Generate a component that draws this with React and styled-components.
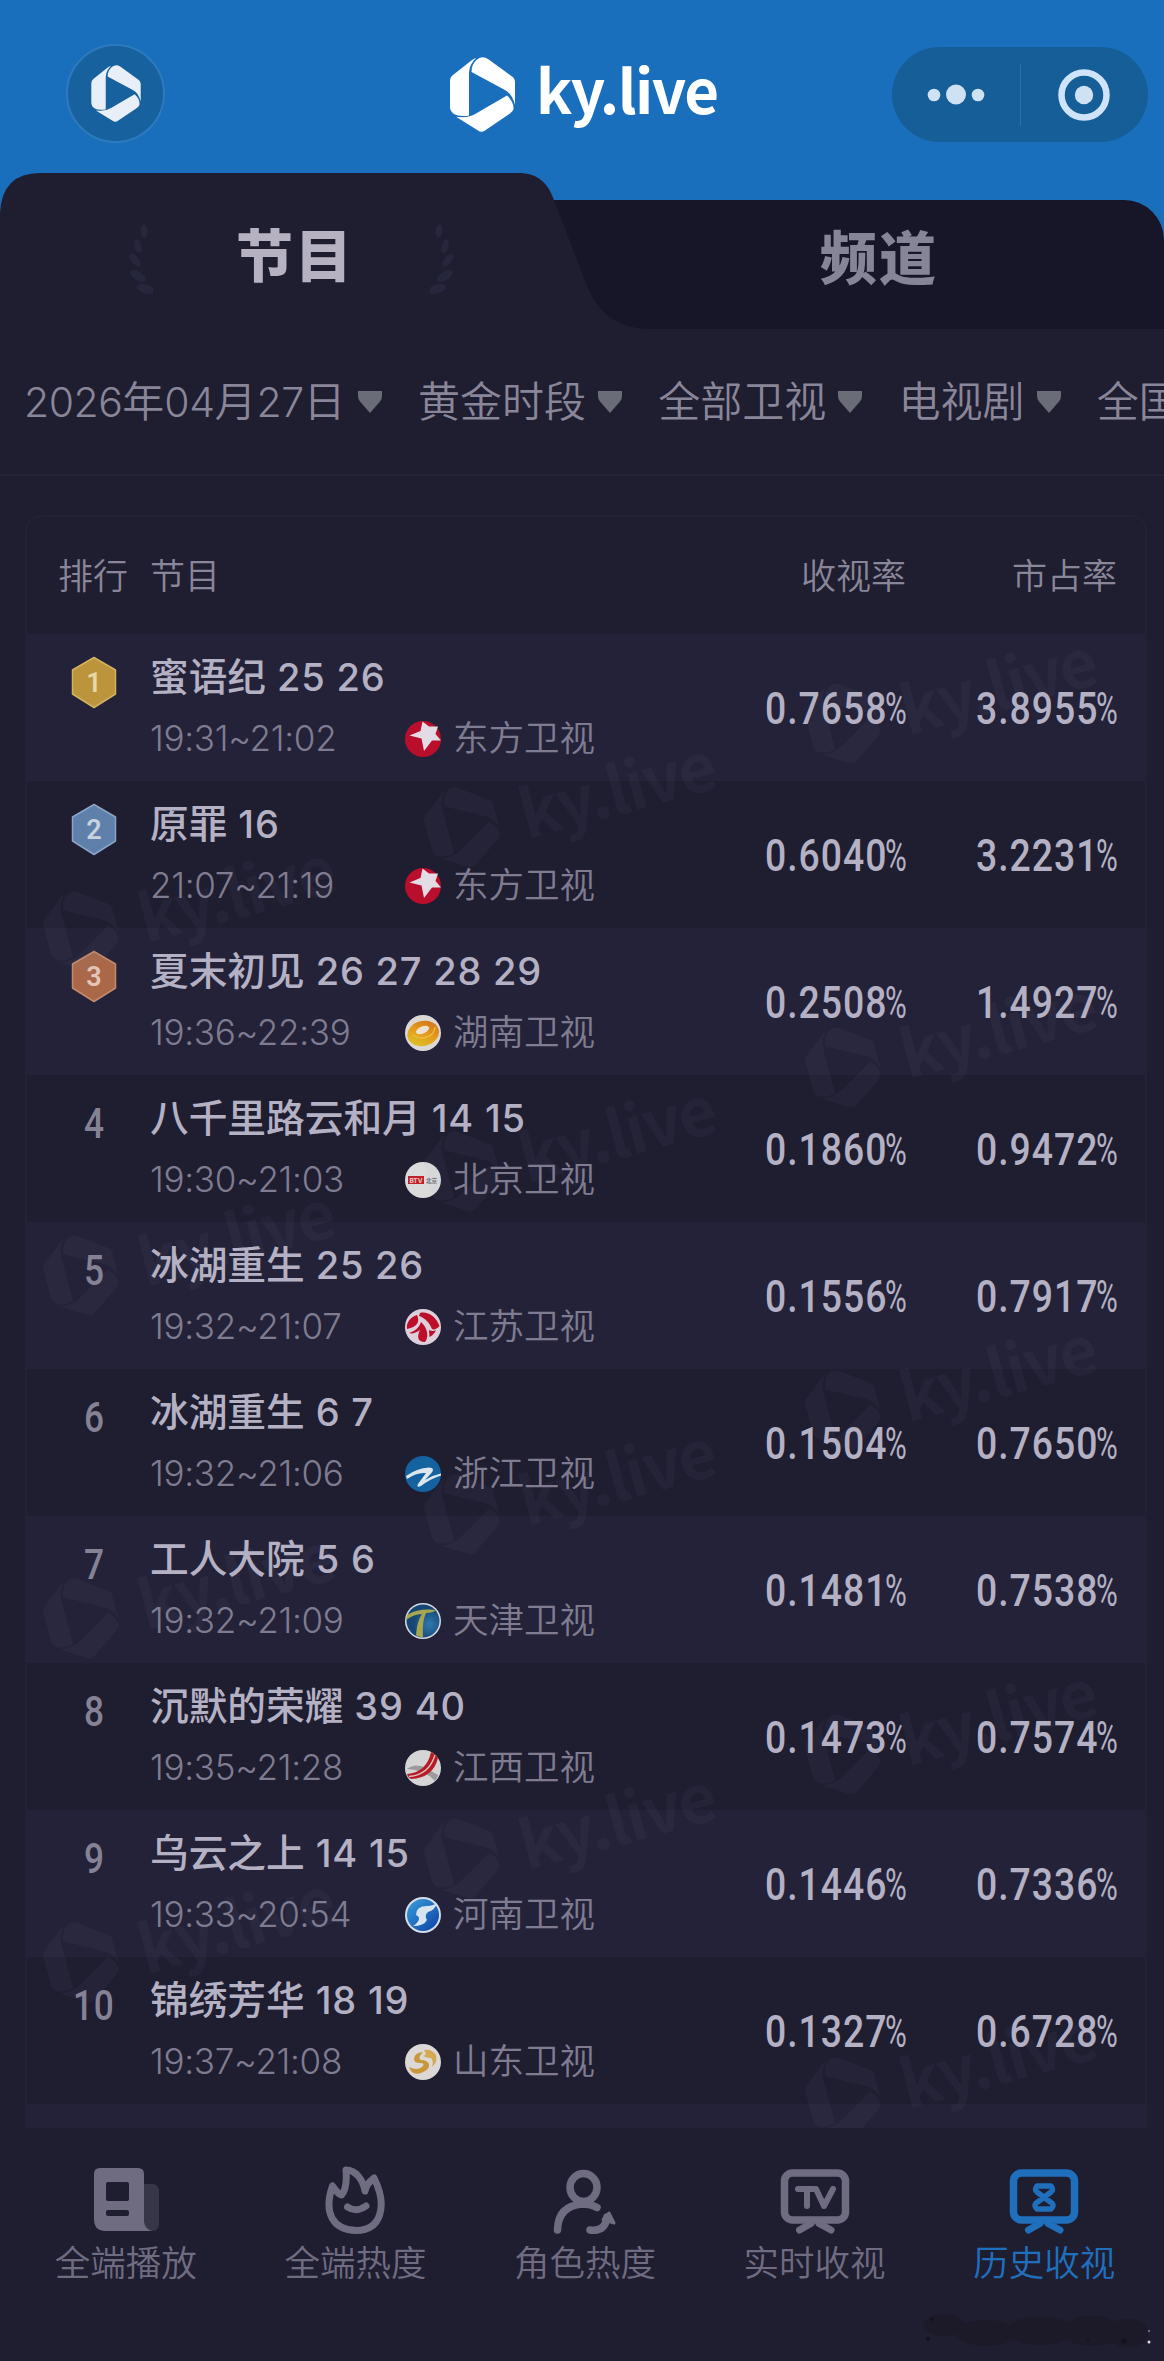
import React from 'react';
import styled, { createGlobalStyle } from 'styled-components';

const color = {
  blue: '#1a6fbc',
  blueDark: '#165e98',
  page: '#1f1d30',
  tabDark: '#171528',
  stripe: '#242238',
  line: '#252338',
  title: '#b4b1c4',
  text: '#898699',
  muted: '#6f6c82',
  active: '#1f6fbd',
};

const GlobalStyle = createGlobalStyle`
  * {
    box-sizing: border-box;
  }
  body {
    margin: 0;
    background: ${color.page};
    font-family: Inter, 'Noto Sans CJK SC', sans-serif;
  }
`;

const Screen = styled.div`
  width: 1164px;
  height: 2361px;
  overflow: hidden;
  display: flex;
  flex-direction: column;
  background: ${color.page};
`;

const Header = styled.header`
  height: 173px;
  flex: none;
  display: grid;
  grid-template-columns: 384px 1fr 272px;
  padding: 44px 0 0;
  align-items: start;
  background: ${color.blue};
`;

const RoundButton = styled.div`
  width: 99px;
  height: 99px;
  margin-left: 66px;
  border-radius: 50%;
  border: 2px solid #2d7abd;
  background: #17619f;
  display: flex;
  align-items: center;
  justify-content: center;
`;

const Brand = styled.div`
  display: flex;
  align-items: flex-start;
  padding: 13px 0 0 66px;
  color: #fff;
`;

const BrandText = styled.strong`
  margin: -1px 0 0 21px;
  font-family: 'Noto Sans CJK SC', sans-serif;
  font-weight: 700;
  font-size: 60px;
  line-height: 64px;
  letter-spacing: -1.6px;
  white-space: nowrap;
`;

const Capsule = styled.div`
  width: 256px;
  height: 95px;
  margin-top: 3px;
  border-radius: 48px;
  background: ${color.blueDark};
  display: flex;
  align-items: center;
`;

const CapsuleHalf = styled.div`
  flex: 1;
  display: flex;
  align-items: center;
  justify-content: center;
`;

const CapsuleLine = styled.div`
  width: 1px;
  height: 62px;
  background: #2d71a8;
`;

const TabBar = styled.div`
  height: 156px;
  flex: none;
  display: flex;
  background: linear-gradient(${color.blue} 100px, ${color.page} 100px);
`;

const ActiveTab = styled.div`
  width: 660px;
  height: 156px;
  flex: none;
  z-index: 1;
  display: flex;
  align-items: center;
  padding: 12px 0 0 127px;
  background: ${color.page};
  clip-path: path(
    'M0 40 Q2 0 40 0 H518 C538 0 548 10 554 27 L582 100 C592 128 606 156 652 156 H0 Z'
  );
`;

const InactiveTab = styled.div`
  flex: 1;
  height: 129px;
  margin: 27px 0 0 -120px;
  padding: 0 0 11px 54px;
  display: flex;
  align-items: center;
  justify-content: center;
  border-radius: 0 40px 0 0;
  background: ${color.tabDark};
`;

const TabText = styled.span`
  width: 118px;
  text-align: center;
  white-space: nowrap;
  font-size: 57px;
  font-weight: 900;
  line-height: 70px;
  letter-spacing: 2px;
  color: ${props => (props.$active ? '#b6b2c1' : '#868598')};
`;

const Laurel = styled.svg`
  margin: ${props => (props.$right ? '0 0 0 76px' : '0 83px 0 0')};
  transform: ${props => (props.$right ? 'scaleX(-1)' : 'none')};
`;

const Filters = styled.div`
  height: 147px;
  flex: none;
  display: flex;
  align-items: flex-start;
  padding: 43px 0 0 24px;
  border-bottom: 2px solid ${color.line};
  overflow: hidden;
`;

const Filter = styled.div`
  flex: none;
  display: flex;
  align-items: center;
  gap: 12px;
  margin-right: 36.3px;
  font-size: 42px;
  font-weight: 350;
  line-height: 60px;
  color: ${color.text};
  white-space: nowrap;
`;

const Digits = styled.span`
  font-size: ${props => props.$size}px;
  letter-spacing: ${props => props.$gap}px;
`;

const Card = styled.section`
  position: relative;
  flex: none;
  width: 1122px;
  height: 1613px;
  margin: 39px 0 0 25px;
  overflow: hidden;
  border: 2px solid #232136;
  border-bottom: 0;
  border-radius: 16px 16px 0 0;
`;

const columns = '121px 1fr 220px 211px';

const TableHead = styled.div`
  height: 117px;
  display: grid;
  grid-template-columns: ${columns};
  padding: 33px 28px 0 2px;
  font-size: 35px;
  font-weight: 350;
  line-height: 52px;
  color: ${color.text};
  white-space: nowrap;
`;

const HeadCell = styled.div`
  text-align: ${props => props.$align || 'left'};
  padding-left: ${props => props.$pad || 0}px;
`;

const Row = styled.div`
  height: 147px;
  display: grid;
  grid-template-columns: ${columns};
  padding: 0 28px 0 2px;
  background: ${props => (props.$striped ? color.stripe : color.page)};
`;

const Rank = styled.div`
  display: flex;
  justify-content: center;
  padding: 22px 0 0 9px;
`;

const RankNumber = styled.span`
  font-family: Roboto, sans-serif;
  font-weight: 500;
  font-size: 42px;
  line-height: 54px;
  letter-spacing: 1px;
  color: #858296;
  transform: scaleX(0.84);
`;

const Program = styled.div`
  padding-top: 17px;
`;

const ProgramTitle = styled.div`
  font-size: 38.7px;
  font-weight: 500;
  line-height: 52px;
  color: ${color.title};
  white-space: nowrap;
`;

const ProgramMeta = styled.div`
  display: grid;
  grid-template-columns: 255px 36px 1fr;
  align-items: center;
  margin-top: 9px;
  font-size: 35.5px;
  font-weight: 350;
  line-height: 52px;
  color: #7f7c91;
  white-space: nowrap;
`;

const ChannelName = styled.span`
  padding-left: 12px;
`;

const Rate = styled.div`
  display: flex;
  justify-content: flex-end;
  align-items: center;
  padding-top: 2px;
  font-family: Roboto, sans-serif;
  font-size: 45px;
  font-weight: 500;
  color: ${color.title};
`;

const RateNumber = styled.span`
  display: block;
  width: 120px;
  letter-spacing: 1.2px;
  transform: scaleX(0.83);
  transform-origin: 0 50%;
`;

const RatePercent = styled.span`
  display: block;
  width: 21px;
  font-weight: 400;
  transform: scaleX(0.66);
  transform-origin: 0 50%;
`;

const Watermark = styled.div`
  position: absolute;
  left: ${props => props.$x}px;
  top: ${props => props.$y}px;
  display: flex;
  align-items: center;
  color: rgba(150, 145, 190, 0.055);
  transform: rotate(-15deg) scale(1.1);
  transform-origin: 32px 37px;
  pointer-events: none;
`;

const BottomNav = styled.nav`
  position: relative;
  flex: 1;
  display: grid;
  grid-template-columns: repeat(5, 229.6px);
  align-content: start;
  padding: 34px 0 0 11px;
`;

const NavItem = styled.div`
  display: flex;
  flex-direction: column;
  align-items: center;
  gap: 4px;
  color: ${props => (props.$active ? color.active : color.muted)};
  font-size: 35.5px;
  font-weight: 350;
  line-height: 52px;
  white-space: nowrap;
`;

const Smudge = styled.svg`
  position: absolute;
  right: 10px;
  bottom: 8px;
`;

const Logo = ({ width, height, fill = 'currentColor' }) => (
  <svg width={width} height={height} viewBox="0 0 65 75" fill={fill}>
    <path d="M0 24Q0 20 3 18L22 3Q25 1 26 1Q19.5 7 19 16V58.5Q9 60 4 57Q0 54 0 50Z" />
    <path d="M21.5 15Q21.5 7 27 2.5Q32.5-1.5 38 2L62 19.5Q65 21.5 65 25V48Q62 36 54 32.5Z" />
    <path d="M6 59.8Q18 61.5 26 56.5L57 38.5Q64 45 63.5 52Q63 54.5 60 56.5L35 73.5Q31.5 76 28 73.5Z" />
  </svg>
);

const LaurelLeaves = ({ right }) => (
  <Laurel $right={right} width="26" height="76" viewBox="0 0 26 76" fill="#26263d">
    <ellipse cx="17" cy="12" rx="3.5" ry="6.5" transform="rotate(-5 17 12)" />
    <ellipse cx="11" cy="27" rx="3.5" ry="7" transform="rotate(-15 11 27)" />
    <ellipse cx="8" cy="41" rx="3.8" ry="7.5" transform="rotate(-38 8 41)" />
    <ellipse cx="11" cy="57" rx="4.5" ry="9" transform="rotate(-58 11 57)" />
    <ellipse cx="19" cy="70" rx="4.5" ry="9.5" transform="rotate(-72 19 70)" />
  </Laurel>
);

const Caret = () => (
  <svg width="24" height="22" viewBox="0 0 24 22">
    <path d="M0 0H24V5Q24 8 22 10.5L12 22L2 10.5Q0 8 0 5Z" fill="#6a6c77" />
  </svg>
);

const medals = {
  1: ['#bb943c', '#d2b35f', '#e6d9a8'],
  2: ['#5f80aa', '#8aa4c4', '#c9d2df'],
  3: ['#aa6849', '#c48a6c', '#e2c6b8'],
};

const Medal = ({ rank }) => {
  const [fill, edge, ink] = medals[rank];

  return (
    <svg width="46" height="54" viewBox="0 0 46 54">
      <path
        d="M23 1.5L44.5 14V38L23 51.5L1.5 38V14Z"
        fill={fill}
        stroke={edge}
        strokeWidth="1.5"
        strokeLinejoin="round"
      />
      <text
        x="23"
        y="36"
        textAnchor="middle"
        fontFamily="Roboto, sans-serif"
        fontWeight="600"
        fontSize="27"
        fill={ink}
      >
        {rank}
      </text>
    </svg>
  );
};

const channelArt = {
  东方卫视: (
    <>
      <circle cx="18" cy="18" r="18" fill="#b90f2d" />
      <path
        d="M4.5 14.5L15.5 10L17.5 .5L24 5.5L33 5.5L30.500 13L36 19.5L27 19.5L19 30L16.5 17.500Z"
        fill="#e4dce4"
      />
    </>
  ),
  湖南卫视: (
    <>
      <circle cx="18" cy="18" r="18" fill="#dcd8d6" />
      <ellipse cx="18" cy="18.5" rx="16" ry="12.5" fill="url(#mango)" transform="rotate(-14 18 18)" />
      <ellipse cx="17.5" cy="15" rx="7" ry="3.600" fill="#eee3d2" transform="rotate(-24 17.5 15)" />
      <path d="M8 20Q14 25 22 22Q30 19 30 12" fill="none" stroke="#eebb3c" strokeWidth="1.500" />
    </>
  ),
  北京卫视: (
    <>
      <circle cx="18" cy="18" r="18" fill="#dcdbdc" />
      <rect x="3" y="14" width="16" height="8" fill="#c02128" />
      <text x="11" y="20.5" textAnchor="middle" fontSize="6.5" fontWeight="700" fill="#e9c8c8">
        BTV
      </text>
      <text x="26.5" y="20.5" textAnchor="middle" fontSize="5.5" fontWeight="700" fill="#6c6c70">
        北京
      </text>
    </>
  ),
  江苏卫视: (
    <>
      <circle cx="18" cy="18" r="18" fill="#ddd0da" />
      <path d="M15 4C22 2 31 7 34.5 17C32 20 29 21 27 20C24 13 20 9 14 7Z" fill="#bd0e2a" />
      <path d="M12 6C15 12 13 18 2 20C1 14 5 8 12 6Z" fill="#bd0e2a" />
      <path d="M4 24C10 22 14 19 16 13C23 19 24 29 20 33C12 33 12 27 15 21C11 24 7 25 4 24Z" fill="#bd0e2a" />
      <path d="M24 21Q28 23 31 21Q29 26 24.5 28Z" fill="#bd0e2a" />
    </>
  ),
  浙江卫视: (
    <>
      <circle cx="18" cy="18" r="18" fill="#1463a0" />
      <path
        d="M1 20Q12 12 24 11.5Q31 12 26 17.5L20 24Q28 19 36 17.5V19.5Q25 23 16 30Q11 32 13 28L21 17Q12 16 2 23Z"
        fill="#dce6ee"
      />
    </>
  ),
  天津卫视: (
    <>
      <circle cx="18" cy="18" r="18" fill="#d5dbe4" />
      <circle cx="18" cy="18" r="16.5" fill="url(#tianjin)" />
      <path d="M2 12Q14 5 31 7Q28 10 21 10Q17 18 18 34Q13 34 11 32Q12 18 17 11Q9 11 1 17Z" fill="#a9a650" />
    </>
  ),
  江西卫视: (
    <>
      <circle cx="18" cy="18" r="18" fill="#d6d5d6" />
      <path d="M2 19Q9 13 19 17L33 25Q32 29 30 31Q20 20 2 19Z" fill="#9b9a9c" />
      <path d="M2 24Q22 22 26 2Q31 4 33 8Q28 28 6 29Q3 28 2 24Z" fill="#b81b23" />
      <path d="M4 26.5Q24 25 30 5" fill="none" stroke="#d6c5c6" strokeWidth="1.3" />
    </>
  ),
  河南卫视: (
    <>
      <circle cx="18" cy="18" r="18" fill="#d5dcea" />
      <circle cx="18" cy="18" r="16" fill="url(#henan)" />
      <path
        d="M11 18Q11 9 22 9Q28 9 32 6Q30 13 23 15Q19 18 22 23Q19 29 8 29Q13 26 14 22Q14 19 11 18Z"
        fill="#d7e5f2"
      />
    </>
  ),
  山东卫视: (
    <>
      <circle cx="18" cy="18" r="18" fill="#dcd8d5" />
      <path d="M18 8Q9 9 9 15Q9 19 15 19Q21 19 17 23Q12 27 4 23Q7 32 16 29Q25 26 24 20Q22 16 16 16Q12 14 18 8Z" fill="#c8973b" />
      <path d="M19 6Q27 5 31 11Q33 18 27 23Q29 17 26 14Q22 14 18 12Q23 11 19 6Z" fill="#d3aa52" />
    </>
  ),
};

const ChannelIcon = ({ name }) => (
  <svg width="36" height="36" viewBox="0 0 36 36">
    <defs>
      <linearGradient id="mango" x1="0" y1="1" x2="1" y2="0">
        <stop offset="0" stopColor="#d8cc2a" />
        <stop offset="0.5" stopColor="#e59d1d" />
        <stop offset="1" stopColor="#cf6a1d" />
      </linearGradient>
      <radialGradient id="tianjin" cx="0.7" cy="0.6">
        <stop offset="0" stopColor="#2f78ad" />
        <stop offset="1" stopColor="#164673" />
      </radialGradient>
      <linearGradient id="henan" x1="0" y1="0" x2="1" y2="1">
        <stop offset="0" stopColor="#3aa0dc" />
        <stop offset="1" stopColor="#0b3fa6" />
      </linearGradient>
    </defs>
    {channelArt[name]}
  </svg>
);

// Numerals are spaced on their own, the Chinese glyphs keep their full width.
const MixedText = ({ text, size, gap }) =>
  text.split(/([\d:~ ]+)/).map((part, i) =>
    /\d/.test(part) ? (
      <Digits key={i} $size={size} $gap={gap}>
        {part}
      </Digits>
    ) : (
      part
    ),
  );

const NavStroke = ({ children, width = 7 }) => (
  <svg
    width="72"
    height="72"
    viewBox="0 0 72 72"
    fill="none"
    stroke="currentColor"
    strokeWidth={width}
    strokeLinecap="round"
    strokeLinejoin="round"
  >
    {children}
  </svg>
);

const navIcons = {
  play: (
    <svg width="72" height="72" viewBox="0 0 72 72" fill="currentColor">
      <path d="M53 22H62Q69 22 69 30V62Q69 69 62 69H53Z" opacity="0.3" />
      <path
        fillRule="evenodd"
        d="M10 6H48Q54 6 54 12V60Q55 67 62 69H14Q4 68 4 58V12Q4 6 10 6ZM18 20Q16 20 16 22V37Q16 39 18 39H37Q39 39 39 37V22Q39 20 37 20ZM18 48Q16 48 16 50V52Q16 54 18 54H37Q39 54 39 52V50Q39 48 37 48Z"
      />
    </svg>
  ),
  heat: (
    <NavStroke>
      <path d="M13.5 24C4.5 50 13 68 37.5 68.5C62 68 69 44 55 16C51 19 47 24 46 29C44 18 37 8 27 8C28 20 27 28 22.500 33C18 32 17 28 13.500 24Z" />
      <path d="M28.500 45Q37 51 47 44" />
    </NavStroke>
  ),
  role: (
    <NavStroke width={7.5}>
      <ellipse cx="34.5" cy="25.5" rx="13.5" ry="14" />
      <path d="M8.5 68Q9 44 33 42Q42 42 48 45.5" />
      <path d="M41 68Q56 70 58 55" />
      <path d="M60 51L54 57.5L65 61Z" fill="currentColor" strokeWidth="3" />
    </NavStroke>
  ),
  tv: (
    <NavStroke width={7.5}>
      <rect x="5.5" y="11" width="61" height="47" rx="8" />
      <path d="M20.5 68L32 61.5M40 61.5L52 68" strokeWidth="7" />
      <path d="M19 27H35M28 27V44M37 27L45 44L54 27" strokeWidth="6" />
    </NavStroke>
  ),
  history: (
    <NavStroke width={7.5}>
      <rect x="5.5" y="11" width="61" height="47" rx="8" />
      <path d="M20.5 68L32 61.5M40 61.5L52 68" strokeWidth="7" />
      <path
        d="M29 24H43Q46 28 43 30L29 40.5Q25 43 29 47H43Q47 43 43 40.5L29 30Q26 28 29 24Z"
        strokeWidth="5.5"
      />
    </NavStroke>
  ),
};

const filters = ['2026年04月27日', '黄金时段', '全部卫视', '电视剧', '全国'];

const programs = [
  ['蜜语纪 25 26', '19:31~21:02', '东方卫视', '0.7658', '3.8955'],
  ['原罪 16', '21:07~21:19', '东方卫视', '0.6040', '3.2231'],
  ['夏末初见 26 27 28 29', '19:36~22:39', '湖南卫视', '0.2508', '1.4927'],
  ['八千里路云和月 14 15', '19:30~21:03', '北京卫视', '0.1860', '0.9472'],
  ['冰湖重生 25 26', '19:32~21:07', '江苏卫视', '0.1556', '0.7917'],
  ['冰湖重生 6 7', '19:32~21:06', '浙江卫视', '0.1504', '0.7650'],
  ['工人大院 5 6', '19:32~21:09', '天津卫视', '0.1481', '0.7538'],
  ['沉默的荣耀 39 40', '19:35~21:28', '江西卫视', '0.1473', '0.7574'],
  ['乌云之上 14 15', '19:33~20:54', '河南卫视', '0.1446', '0.7336'],
  ['锦绣芳华 18 19', '19:37~21:08', '山东卫视', '0.1327', '0.6728'],
];

const navItems = [
  { label: '全端播放', icon: 'play' },
  { label: '全端热度', icon: 'heat' },
  { label: '角色热度', icon: 'role' },
  { label: '实时收视', icon: 'tv' },
  { label: '历史收视', icon: 'history', active: true },
];

const watermarks = [
  ...[0, 1, 2, 3, 4].map(i => ({ x: 784, y: 169 + i * 343.5 })),
  ...[0, 1, 2, 3].map(i => ({ x: 403, y: 273 + i * 343.5 })),
  ...[0, 1, 2, 3].map(i => ({ x: 22, y: 377 + i * 343.5 })),
];

const RateValue = ({ value }) => (
  <Rate>
    <RateNumber>{value}</RateNumber>
    <RatePercent>%</RatePercent>
  </Rate>
);

const ProgramRow = ({ rank, program }) => {
  const [title, time, channel, rating, share] = program;

  return (
    <Row $striped={rank % 2 === 1}>
      <Rank>{rank <= 3 ? <Medal rank={rank} /> : <RankNumber>{rank}</RankNumber>}</Rank>
      <Program>
        <ProgramTitle>
          <MixedText text={title} size={38} gap={0.8} />
        </ProgramTitle>
        <ProgramMeta>
          <span>
            <MixedText text={time} size={35} gap={-0.3} />
          </span>
          <ChannelIcon name={channel} />
          <ChannelName>{channel}</ChannelName>
        </ProgramMeta>
      </Program>
      <RateValue value={rating} />
      <RateValue value={share} />
    </Row>
  );
};

const App = () => (
  <Screen>
    <GlobalStyle />
    <Header>
      <RoundButton>
        <Logo width={50} height={57} fill="#e9eff8" />
      </RoundButton>
      <Brand>
        <Logo width={65} height={75} />
        <BrandText>ky.live</BrandText>
      </Brand>
      <Capsule>
        <CapsuleHalf>
          <svg width="58" height="22" viewBox="0 0 58 22" fill="#cfe2f3">
            <circle cx="7" cy="11" r="6.3" />
            <circle cx="29" cy="10.5" r="10" />
            <circle cx="51" cy="11" r="6.3" />
          </svg>
        </CapsuleHalf>
        <CapsuleLine />
        <CapsuleHalf>
          <svg width="54" height="54" viewBox="0 0 54 54">
            <circle cx="27" cy="27" r="22.5" fill="none" stroke="#cfe4fa" strokeWidth="6.5" />
            <circle cx="27" cy="27" r="9.2" fill="#cfe2f3" />
          </svg>
        </CapsuleHalf>
      </Capsule>
    </Header>

    <TabBar>
      <ActiveTab>
        <LaurelLeaves />
        <TabText $active>节目</TabText>
        <LaurelLeaves right />
      </ActiveTab>
      <InactiveTab>
        <TabText>频道</TabText>
      </InactiveTab>
    </TabBar>

    <Filters>
      {filters.map(label => (
        <Filter key={label}>
          <span>
            <MixedText text={label} size={41} gap={-0.5} />
          </span>
          <Caret />
        </Filter>
      ))}
    </Filters>

    <Card>
      <TableHead>
        <HeadCell $pad={29}>排行</HeadCell>
        <HeadCell>节目</HeadCell>
        <HeadCell $align="right">收视率</HeadCell>
        <HeadCell $align="right">市占率</HeadCell>
      </TableHead>
      {programs.map((program, i) => (
        <ProgramRow key={program[0]} rank={i + 1} program={program} />
      ))}
      <Row $striped />
      {watermarks.map(({ x, y }) => (
        <Watermark key={`${x}-${y}`} $x={x} $y={y}>
          <Logo width={65} height={75} />
          <BrandText>ky.live</BrandText>
        </Watermark>
      ))}
    </Card>

    <BottomNav>
      {navItems.map(({ label, icon, active }) => (
        <NavItem key={label} $active={active}>
          {navIcons[icon]}
          {label}
        </NavItem>
      ))}
      <Smudge width="234" height="44" viewBox="0 0 234 44">
        <g fill="#1b1a26" opacity="0.7">
          <ellipse cx="24" cy="16" rx="20" ry="11" />
          <ellipse cx="66" cy="24" rx="30" ry="13" />
          <ellipse cx="120" cy="22" rx="34" ry="14" />
          <ellipse cx="172" cy="22" rx="30" ry="15" />
          <ellipse cx="208" cy="24" rx="20" ry="14" />
        </g>
        <g fill="#14131c">
          <circle cx="12" cy="10" r="2" />
          <circle cx="8" cy="30" r="2" />
          <circle cx="168" cy="30" r="1.5" />
          <circle cx="204" cy="32" r="2.5" />
        </g>
        <circle cx="229" cy="33" r="1.5" fill="#e0dfe6" />
        <circle cx="229" cy="22" r="1" fill="#83828f" />
      </Smudge>
    </BottomNav>
  </Screen>
);

export default App;
